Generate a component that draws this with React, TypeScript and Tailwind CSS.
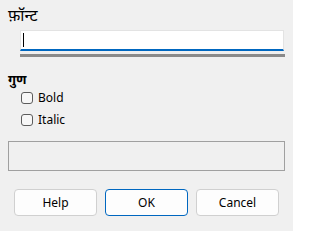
const font = { fontFamily: '"Segoe UI", "Noto Sans", "Noto Sans Devanagari", "Lohit Devanagari", sans-serif' }

function Check({ label }: { label: string }) {
  return (
    <label className="flex h-[12px] items-center gap-[5px] text-[12px] text-black">
      <span className="block h-[12px] w-[12px] rounded-[3px] border border-[#5c5c5c] bg-[#f7f7f7]" />
      <span className="leading-none">{label}</span>
    </label>
  )
}

function Btn({ label, primary }: { label: string; primary?: boolean }) {
  return (
    <button
      className={
        primary
          ? "flex h-[27px] w-[83px] items-center justify-center rounded-[4px] border border-[#0067c0] bg-[#fdfdfd] text-[12px] text-black"
          : "flex h-[27px] w-[83px] items-center justify-center rounded-[4px] border border-[#d0d0d0] bg-[#fdfdfd] text-[12px] text-black"
      }
    >
      {label}
    </button>
  )
}

export default function App() {
  return (
    <div className="flex h-[231px] w-[293px] flex-col bg-[#f0f0f0] pl-[8px]" style={font}>
      <div className="mt-[5px] h-[20px] text-[16px] leading-[20px] text-black">फ़ॉन्ट</div>
      <div className="ml-[12px] mt-[5px] flex h-[21px] w-[264px] items-center border border-b-2 border-[#e3e3e3] border-b-[#0067c0] bg-white pl-[2px]">
        <span className="block h-[14px] w-[1px] bg-black" />
      </div>
      <div className="ml-[12px] mt-[3px] h-[3px] w-[265px] bg-[#8a8a8a]" />
      <div className="mt-[14px] h-[16px] text-[13px] font-bold leading-[16px] text-black">गुण</div>
      <div className="ml-[13px] mt-[5px] flex flex-col gap-[10px]">
        <Check label="Bold" />
        <Check label="Italic" />
      </div>
      <div className="mt-[15px] h-[30px] w-[277px] border border-[#a0a0a0]" />
      <div className="ml-[6px] mt-[18px] flex gap-[8px]">
        <Btn label="Help" />
        <Btn label="OK" primary />
        <Btn label="Cancel" />
      </div>
    </div>
  )
}
